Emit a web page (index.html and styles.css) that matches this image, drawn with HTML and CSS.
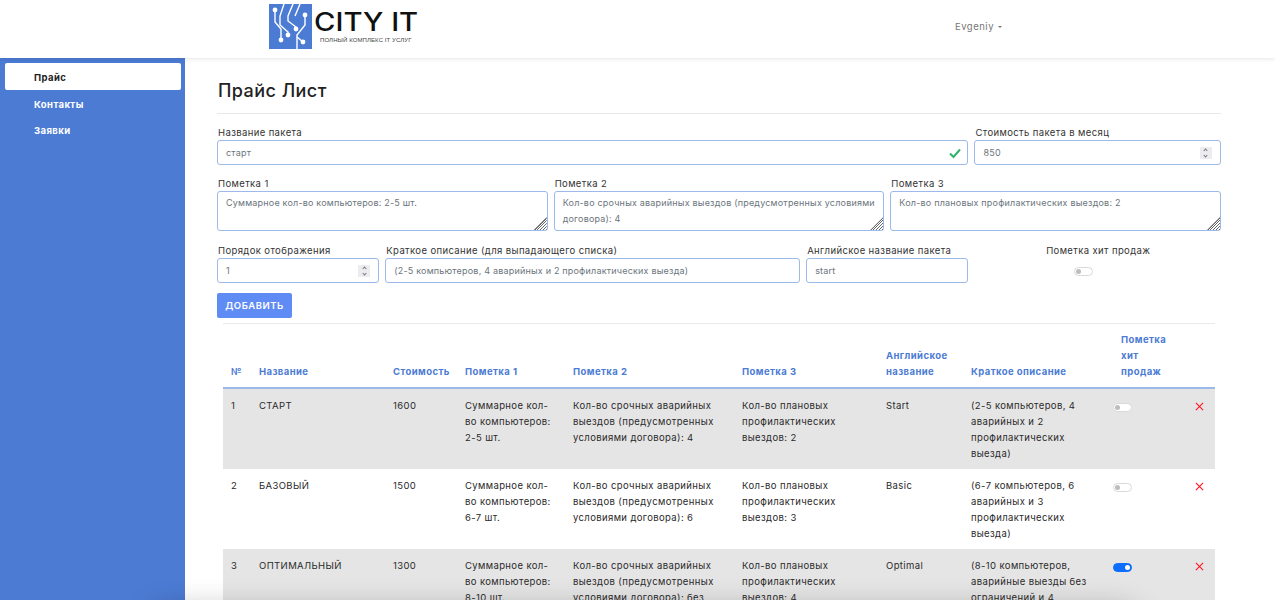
FILE: index.html
```html
<!DOCTYPE html>
<html lang="ru">
<head>
<meta charset="utf-8">
<title>Прайс Лист</title>
<link rel="stylesheet" href="styles.css">
</head>
<body>
<header class="topbar">
  <a class="logo">
    <svg class="logo-mark" viewBox="0 0 43 45" width="43" height="45">
      <rect width="43" height="45" fill="#4c7bd4"/>
      <g fill="none" stroke="#fff" stroke-width="1.4">
        <path d="M6 6V18L12 25V36"/>
        <path d="M15 0L11 12V21L19 28V31"/>
        <path d="M24 0L19 12V17L27 23V25"/>
        <path d="M31 0L26 12"/>
        <path d="M36 11V21L28 31V45"/>
        <path d="M34 38L28 33"/>
      </g>
      <g fill="#fff">
        <circle cx="6" cy="6" r="2.4"/><circle cx="12" cy="36" r="2.4"/><circle cx="19" cy="31" r="2.4"/>
        <circle cx="27" cy="25" r="2.4"/><circle cx="36" cy="11" r="2.4"/><circle cx="34" cy="38" r="2.4"/>
      </g>
    </svg>
    <span class="logo-text">
      <span class="logo-name">CITY IT</span>
      <span class="logo-sub">ПОЛНЫЙ КОМПЛЕКС IT УСЛУГ</span>
    </span>
  </a>
  <div class="user">Evgeniy<span class="caret"></span></div>
</header>
<div class="shell">
  <nav class="sidebar">
    <a class="nav-item active">Прайс</a>
    <a class="nav-item">Контакты</a>
    <a class="nav-item">Заявки</a>
  </nav>
  <main class="content">
    <h1 class="title">Прайс Лист</h1>
    <form class="form">
      <div class="field span-9">
        <label>Название пакета</label>
        <div class="control valid">
          <span class="value">старт</span>
          <svg class="check" viewBox="0 0 12 12" width="12" height="12"><path d="M1 6.5L4.5 10L11 2.5" fill="none" stroke="#2fb36b" stroke-width="2"/></svg>
        </div>
      </div>
      <div class="field span-3">
        <label>Стоимость пакета в месяц</label>
        <div class="control"><span class="value">850</span><span class="spin"><i class="up"></i><i class="down"></i></span></div>
      </div>
      <div class="field span-4">
        <label>Пометка 1</label>
        <div class="control area"><span class="value">Суммарное кол-во компьютеров: 2-5 шт.</span><span class="grip"></span></div>
      </div>
      <div class="field span-4">
        <label>Пометка 2</label>
        <div class="control area"><span class="value">Кол-во срочных аварийных выездов (предусмотренных условиями договора): 4</span><span class="grip"></span></div>
      </div>
      <div class="field span-4">
        <label>Пометка 3</label>
        <div class="control area"><span class="value">Кол-во плановых профилактических выездов: 2</span><span class="grip"></span></div>
      </div>
      <div class="field span-2">
        <label>Порядок отображения</label>
        <div class="control"><span class="value">1</span><span class="spin"><i class="up"></i><i class="down"></i></span></div>
      </div>
      <div class="field span-5">
        <label>Краткое описание (для выпадающего списка)</label>
        <div class="control"><span class="value">(2-5 компьютеров, 4 аварийных и 2 профилактических выезда)</span></div>
      </div>
      <div class="field span-2">
        <label>Английское название пакета</label>
        <div class="control"><span class="value">start</span></div>
      </div>
      <div class="field span-3 center">
        <label>Пометка хит продаж</label>
        <span class="switch form-switch"></span>
      </div>
    </form>
    <button class="add" type="button">ДОБАВИТЬ</button>
    <div class="table-wrap">
      <table class="prices">
        <colgroup>
          <col class="c-num"><col class="c-name"><col class="c-cost"><col class="c-n1"><col class="c-n2"><col class="c-n3"><col class="c-en"><col class="c-desc"><col class="c-hit"><col class="c-del">
        </colgroup>
        <thead>
          <tr><th>№</th><th>Название</th><th>Стоимость</th><th>Пометка 1</th><th>Пометка 2</th><th>Пометка 3</th><th>Английское название</th><th>Краткое описание</th><th>Пометка хит продаж</th><th></th></tr>
        </thead>
        <tbody>
          <tr class="odd">
            <td>1</td><td>СТАРТ</td><td>1600</td>
            <td>Суммарное кол-во компьютеров: 2-5 шт.</td>
            <td>Кол-во срочных аварийных выездов (предусмотренных условиями договора): 4</td>
            <td>Кол-во плановых профилактических выездов: 2</td>
            <td>Start</td>
            <td>(2-5 компьютеров, 4 аварийных и 2 профилактических выезда)</td>
            <td class="hit"><span class="switch"></span></td>
            <td class="del"><svg viewBox="0 0 10 10" width="9" height="9"><path d="M1 1L9 9M9 1L1 9" stroke="#ff1a2a" stroke-width="1.3"/></svg></td>
          </tr>
          <tr>
            <td>2</td><td>БАЗОВЫЙ</td><td>1500</td>
            <td>Суммарное кол-во компьютеров: 6-7 шт.</td>
            <td>Кол-во срочных аварийных выездов (предусмотренных условиями договора): 6</td>
            <td>Кол-во плановых профилактических выездов: 3</td>
            <td>Basic</td>
            <td>(6-7 компьютеров, 6 аварийных и 3 профилактических выезда)</td>
            <td class="hit"><span class="switch"></span></td>
            <td class="del"><svg viewBox="0 0 10 10" width="9" height="9"><path d="M1 1L9 9M9 1L1 9" stroke="#ff1a2a" stroke-width="1.3"/></svg></td>
          </tr>
          <tr class="odd">
            <td>3</td><td>ОПТИМАЛЬНЫЙ</td><td>1300</td>
            <td>Суммарное кол-во компьютеров: 8-10 шт.</td>
            <td>Кол-во срочных аварийных выездов (предусмотренных условиями договора): без ограничений</td>
            <td>Кол-во плановых профилактических выездов: 4</td>
            <td>Optimal</td>
            <td>(8-10 компьютеров, аварийные выезды без ограничений и 4 профилактических выезда)</td>
            <td class="hit"><span class="switch on"></span></td>
            <td class="del"><svg viewBox="0 0 10 10" width="9" height="9"><path d="M1 1L9 9M9 1L1 9" stroke="#ff1a2a" stroke-width="1.3"/></svg></td>
          </tr>
        </tbody>
      </table>
    </div>
  </main>
</div>
<div class="bottom-shade"></div>
</body>
</html>
```

FILE: styles.css
```css
* { box-sizing: border-box; }
html, body { margin: 0; height: 600px; overflow: hidden; }
body {
  font-family: Inter, "Noto Sans", sans-serif;
  font-size: 9.5px;
  line-height: 16px;
  letter-spacing: 0.5px;
  color: #333;
  background: #fff;
}
.topbar {
  height: 58px;
  display: flex;
  align-items: flex-start;
  padding-left: 269px;
  background: #fff;
  box-shadow: 0 1px 4px rgba(0,0,0,.1);
  position: relative;
  z-index: 1;
}
.logo { display: flex; align-items: flex-start; padding-top: 4px; gap: 2px; width: 686px; flex: none; }
.logo-mark { display: block; }
.logo-text { display: flex; flex-direction: column; padding-top: 5px; }
.logo-name {
  font-family: Inter, sans-serif;
  font-size: 25px;
  line-height: 26px;
  font-weight: 500;
  letter-spacing: 0;
  color: #111;
  transform: scaleX(1.17);
  transform-origin: left center;
}
.logo-sub {
  font-family: "Liberation Sans", sans-serif;
  font-size: 6px;
  line-height: 8px;
  letter-spacing: 0.1px;
  color: #444;
  padding-left: 6px;
  margin-top: 1px;
}
.user {
  margin-top: 19px;
  color: #777;
  display: flex;
  align-items: center;
  gap: 4px;
}
.caret { width: 0; height: 0; border: 2.5px solid transparent; border-top-color: #777; border-bottom: 0; }
.shell { display: flex; height: 542px; }
.sidebar {
  width: 185px;
  flex: none;
  padding: 5px 4px 0 5px;
  background: #4c7bd4;
  display: flex;
  flex-direction: column;
}
.nav-item {
  height: 27px;
  line-height: 29px;
  margin-bottom: -0.5px;
  padding-left: 29px;
  font-weight: 700;
  letter-spacing: 0.4px;
  color: #fff;
  border-radius: 2px;
}
.nav-item.active { background: #fff; color: #222; }
.content { flex: 1; min-width: 0; padding: 0 54px 0 32px; }
.title {
  margin: 0 0 15px;
  height: 56px;
  padding-top: 19px;
  font-size: 18px;
  line-height: 28px;
  font-weight: 500;
  text-indent: 1px;
  color: #222;
  letter-spacing: 0.45px;
  border-bottom: 1px solid #e8e8e8;
}
.form {
  display: grid;
  grid-template-columns: repeat(12, 1fr);
  column-gap: 6px;
  row-gap: 15px;
}
.field { display: flex; flex-direction: column; min-width: 0; }
.field label { height: 15px; line-height: 15px; padding-left: 1px; letter-spacing: 0.38px; color: #333; margin-top: -4px; }
.span-9 { grid-column: span 9; }
.span-5 { grid-column: span 5; }
.span-4 { grid-column: span 4; }
.span-3 { grid-column: span 3; }
.span-2 { grid-column: span 2; }
.control {
  height: 25px;
  padding: 0 8px;
  display: flex;
  align-items: center;
  justify-content: space-between;
  background: #fff;
  border: 1px solid #9db9e9;
  border-radius: 3px;
  color: #6c757d;
  font-size: 9px;
  letter-spacing: 0.2px;
  position: relative;
}
.area { height: 40px; margin-bottom: 1px; align-items: flex-start; padding: 3px 8px; }
.area .value { line-height: 16px; }
.check { flex: none; margin-right: -2px; }
.spin {
  width: 12px;
  height: 12px;
  background: #ececf0;
  display: flex;
  flex-direction: column;
  align-items: center;
  justify-content: center;
  gap: 2px;
}
.spin i { width: 3px; height: 3px; border-left: 1px solid #777; border-top: 1px solid #777; display: block; transform: rotate(45deg); }
.spin i.down { transform: rotate(225deg); }
.grip {
  position: absolute;
  right: 0;
  bottom: 0;
  width: 13px;
  height: 13px;
  background: repeating-linear-gradient(135deg, transparent 0 1px, #666 1px 2px);
  clip-path: polygon(100% 0, 100% 100%, 0 100%);
}
.center { align-items: center; }
.form-switch { margin: 9px 28px 0 0; }
.switch {
  display: block;
  width: 19px;
  height: 9px;
  border-radius: 5px;
  border: 1px solid #d9d9d9;
  background: #fff;
  position: relative;
}
.switch::after {
  content: "";
  position: absolute;
  left: 1px;
  top: 1px;
  width: 5px;
  height: 5px;
  border-radius: 50%;
  background: #bdbdbd;
}
.switch.on { background: #0d6efd; border-color: #0d6efd; }
.switch.on::after { left: auto; right: 1px; background: #fff; }
.add {
  display: block;
  margin-top: 10px;
  width: 75px;
  height: 25px;
  padding: 0;
  border: 0;
  border-radius: 2px;
  background: #5f8bf5;
  color: #fff;
  font: 600 9.5px/25px Inter, sans-serif;
  letter-spacing: 0.5px;
}
.table-wrap { margin: 5px 6px 0; border-top: 1px solid #eaeaea; padding-top: 8px; }
.prices { width: 992px; border-collapse: collapse; table-layout: fixed; }
.c-num { width: 28px; } .c-name { width: 134px; } .c-cost { width: 72px; } .c-n1 { width: 108px; }
.c-n2 { width: 169px; } .c-n3 { width: 144px; } .c-en { width: 85px; } .c-desc { width: 150px; }
.c-hit { width: 72px; } .c-del { width: 30px; }
.prices th {
  padding: 0 8px 7px;
  vertical-align: bottom;
  text-align: left;
  color: #4c7bd4;
  font-weight: 700;
  letter-spacing: 0.42px;
  border-bottom: 2px solid #9db9e9;
}
.prices td { padding: 9px 8px 7px; height: 80px; vertical-align: top; color: #2a2a2a; font-weight: 400; letter-spacing: 0.38px; }
.prices tr.odd td { background: #e5e5e5; }
.prices td.hit { padding-left: 0; padding-top: 14px; }
.prices td.del { padding: 13px 0 0 10px; }
.prices td.del svg { display: block; }
.bottom-shade {
  position: absolute;
  left: 150px;
  width: 990px;
  top: 610px;
  height: 40px;
  border-radius: 20px;
  pointer-events: none;
  box-shadow: 0 0 30px rgba(0,0,0,.3);
}
```
